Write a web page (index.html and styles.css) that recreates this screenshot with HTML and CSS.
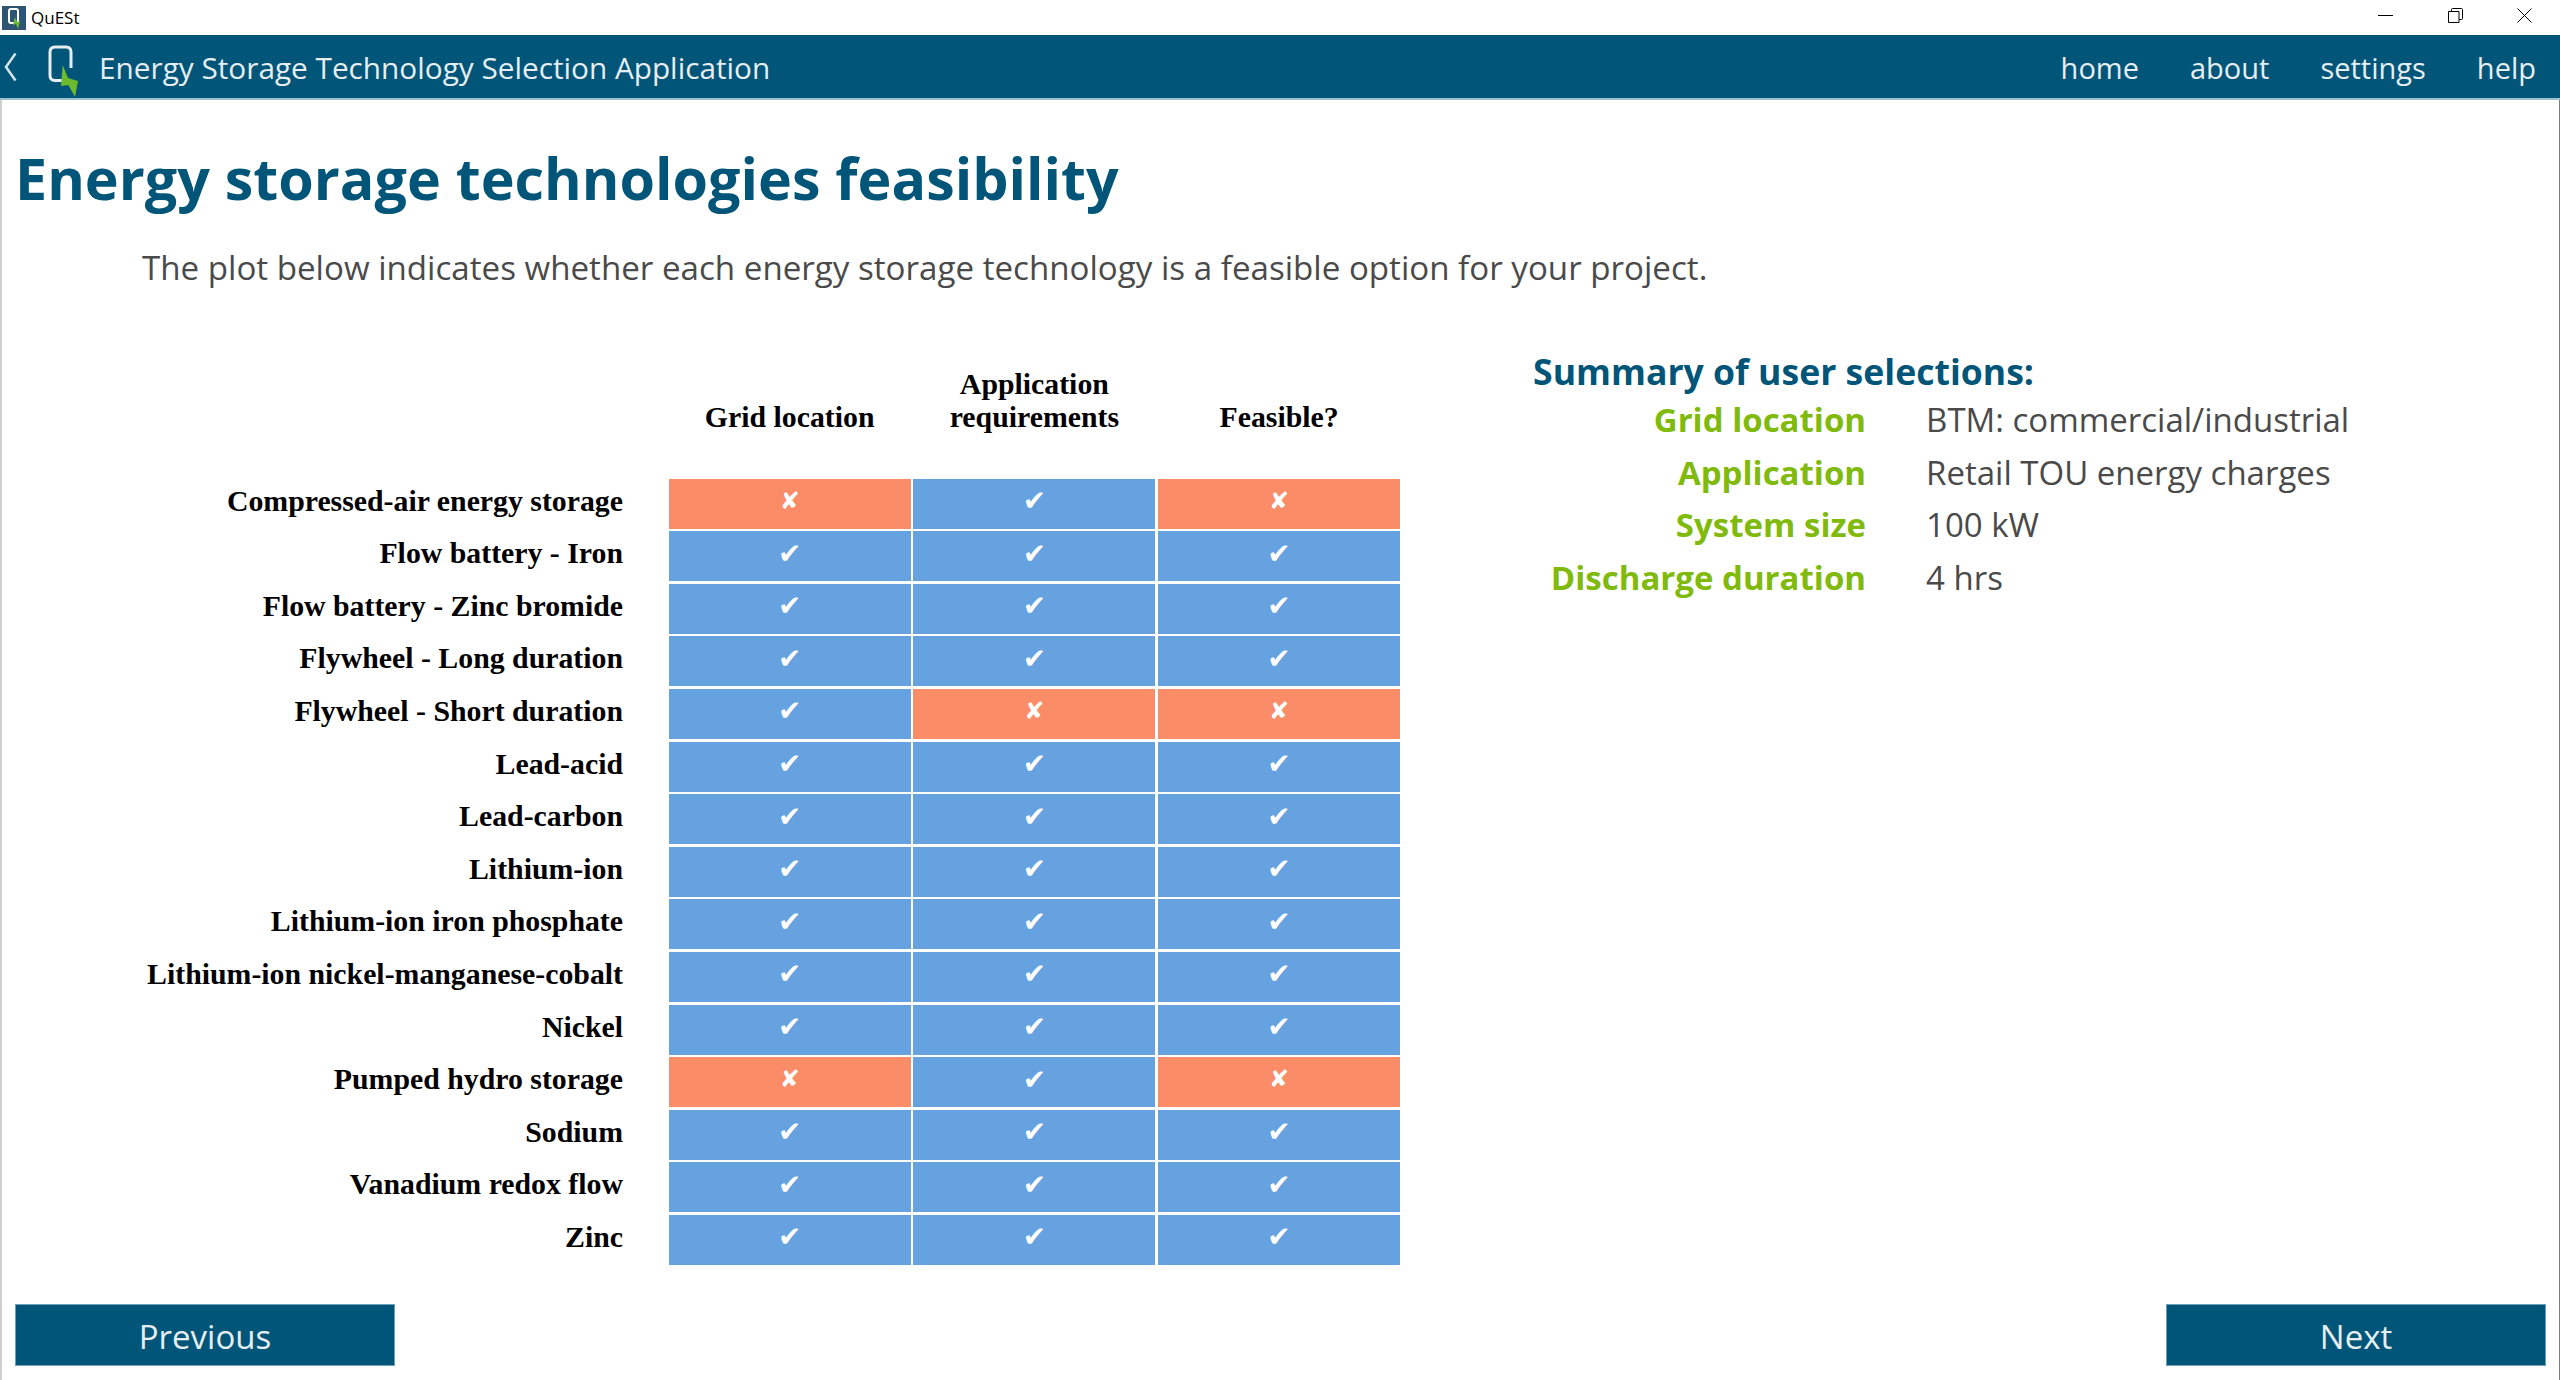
FILE: index.html
```html
<!DOCTYPE html>
<html lang="en">
<head>
    <title>QuESt</title>
    <meta charset="UTF-8" />
    <link rel="stylesheet" href="styles.css">
</head>
<body>
    <div class="titlebar">
        <div class="app-name">
            <svg class="app-icon" viewBox="0 0 24 24">
                <rect width="24" height="24" fill="#2f5575" />
                <path d="M9 3h5q2 0 2 2v10q0 2-2 2H9q-2 0-2-2V5q0-2 2-2z" fill="none" stroke="#fff" stroke-width="2" />
                <path d="M13 11l2 5 3-1-2 8-2-5-3 1z" fill="#6cbb2c" />
            </svg>
            <span>QuESt</span>
        </div>
        <div class="window-controls">
            <svg class="win-btn" viewBox="0 0 15 15"><path d="M0 7.500h15" stroke="#000" fill="none" /></svg>
            <svg class="win-btn" viewBox="0 0 15 15"><path d="M.5 3.500h10.500v11H.5zM3.500 3.500V1.500a1 1 0 0 1 1-1h9a1 1 0 0 1 1 1v9a1 1 0 0 1-1 1H11" stroke="#000" fill="none" /></svg>
            <svg class="win-btn" viewBox="0 0 15 15"><path d="M.5.500l14 14M14.500.500l-14 14" stroke="#000" fill="none" /></svg>
        </div>
    </div>

    <nav class="navbar">
        <svg class="back-icon" viewBox="0 0 13 30"><path d="M11.500 1.500L2 15l9.500 13.500" fill="none" stroke="#d5e3ea" stroke-width="2.500" /></svg>
        <svg class="logo" viewBox="0 0 30 52">
            <path d="M14 35.500H7q-5 0-5-5V7q0-5 5-5h11q5 0 5 5v16" fill="none" stroke="#e6eef2" stroke-width="3" />
            <path d="M14.700 20L20 33l10 3-3 16-6.700-12-7.300 1z" fill="#6cbb2c" />
        </svg>
        <span class="app-title">Energy Storage Technology Selection Application</span>
        <div class="nav-links">
            <a>home</a>
            <a>about</a>
            <a>settings</a>
            <a>help</a>
        </div>
    </nav>

    <main>
        <h1>Energy storage technologies feasibility</h1>
        <p class="intro">The plot below indicates whether each energy storage technology is a feasible option for your project.</p>

        <div class="content">
            <div class="plot">
                <div class="col-head"></div>
                <div class="col-head">Grid location</div>
                <div class="col-head">Application<br>requirements</div>
                <div class="col-head">Feasible?</div>

                <div class="tech">Compressed-air energy storage</div>
                <div class="cell no">✘</div><div class="cell yes">✔</div><div class="cell no">✘</div>
                <div class="tech">Flow battery - Iron</div>
                <div class="cell yes">✔</div><div class="cell yes">✔</div><div class="cell yes">✔</div>
                <div class="tech">Flow battery - Zinc bromide</div>
                <div class="cell yes">✔</div><div class="cell yes">✔</div><div class="cell yes">✔</div>
                <div class="tech">Flywheel - Long duration</div>
                <div class="cell yes">✔</div><div class="cell yes">✔</div><div class="cell yes">✔</div>
                <div class="tech">Flywheel - Short duration</div>
                <div class="cell yes">✔</div><div class="cell no">✘</div><div class="cell no">✘</div>
                <div class="tech">Lead-acid</div>
                <div class="cell yes">✔</div><div class="cell yes">✔</div><div class="cell yes">✔</div>
                <div class="tech">Lead-carbon</div>
                <div class="cell yes">✔</div><div class="cell yes">✔</div><div class="cell yes">✔</div>
                <div class="tech">Lithium-ion</div>
                <div class="cell yes">✔</div><div class="cell yes">✔</div><div class="cell yes">✔</div>
                <div class="tech">Lithium-ion iron phosphate</div>
                <div class="cell yes">✔</div><div class="cell yes">✔</div><div class="cell yes">✔</div>
                <div class="tech">Lithium-ion nickel-manganese-cobalt</div>
                <div class="cell yes">✔</div><div class="cell yes">✔</div><div class="cell yes">✔</div>
                <div class="tech">Nickel</div>
                <div class="cell yes">✔</div><div class="cell yes">✔</div><div class="cell yes">✔</div>
                <div class="tech">Pumped hydro storage</div>
                <div class="cell no">✘</div><div class="cell yes">✔</div><div class="cell no">✘</div>
                <div class="tech">Sodium</div>
                <div class="cell yes">✔</div><div class="cell yes">✔</div><div class="cell yes">✔</div>
                <div class="tech">Vanadium redox flow</div>
                <div class="cell yes">✔</div><div class="cell yes">✔</div><div class="cell yes">✔</div>
                <div class="tech">Zinc</div>
                <div class="cell yes">✔</div><div class="cell yes">✔</div><div class="cell yes">✔</div>
            </div>

            <div class="summary">
                <h2>Summary of user selections:</h2>
                <dl>
                    <dt>Grid location</dt><dd>BTM: commercial/industrial</dd>
                    <dt>Application</dt><dd>Retail TOU energy charges</dd>
                    <dt>System size</dt><dd>100 kW</dd>
                    <dt>Discharge duration</dt><dd>4 hrs</dd>
                </dl>
            </div>
        </div>

        <div class="footer-nav">
            <button>Previous</button>
            <button>Next</button>
        </div>
    </main>
</body>
</html>
```

FILE: styles.css
```css
html, body {
    height: 100%;
}
body {
    margin: 0;
    background: #fff;
    font-family: "Open Sans", sans-serif;
    color: #4a4a4a;
    display: flex;
    flex-direction: column;
    overflow: hidden;
}
.titlebar {
    height: 35px;
    flex: none;
    display: flex;
    justify-content: space-between;
    align-items: center;
    background: #fff;
}
.app-name {
    display: flex;
    align-items: center;
    gap: 5px;
    padding-left: 2px;
    color: #000;
    font-family: "Open Sans", sans-serif;
    font-size: 17px;
}
.app-icon {
    width: 24px;
    height: 24px;
}
.window-controls {
    display: flex;
    gap: 54.500px;
    padding-right: 28px;
    padding-bottom: 4px;
}
.win-btn {
    width: 15px;
    height: 15px;
}
.navbar {
    height: 63px;
    flex: none;
    display: flex;
    align-items: center;
    background: #005578;
    border-bottom: 2px solid #9dc0d0;
    color: #e6eef2;
}
.back-icon {
    width: 13px;
    height: 30px;
    margin-left: 4px;
}
.logo {
    width: 30px;
    height: 52px;
    margin-left: 31px;
    margin-top: 9px;
}
.app-title {
    margin-left: 21px;
    padding-top: 2px;
    font-size: 29.750px;
}
.nav-links {
    margin-left: auto;
    display: flex;
    gap: 51px;
    padding-top: 2px;
    padding-right: 24px;
    font-size: 29px;
}
main {
    flex: 1;
    min-height: 0;
    display: flex;
    flex-direction: column;
    padding: 0 13px 14px 13px;
    border-left: 2px solid #cfcfcf;
    border-right: 1px solid #7d7d7d;
}
h1 {
    margin: 43px 0 0;
    font-size: 57.400px;
    line-height: 70px;
    font-weight: 700;
    color: #005578;
}
.intro {
    margin: 33px 0 0 127px;
    font-size: 33.130px;
    line-height: 44px;
}
.content {
    flex: 1;
    display: flex;
    margin-top: 50px;
}
.plot {
    display: grid;
    grid-template-columns: 651px 242px 242px 242px;
    grid-template-rows: 98px repeat(15, 50px);
    row-gap: 2.600px;
    column-gap: 2.700px;
    margin-top: 38px;
    font-family: "Liberation Serif", serif;
    font-weight: 700;
    color: #000;
    font-size: 29.800px;
}
.col-head {
    text-align: center;
    line-height: 33px;
    align-self: end;
    padding-bottom: 43px;
}
.tech {
    text-align: right;
    padding-right: 43px;
    line-height: 44px;
}
.cell {
    display: flex;
    align-items: center;
    justify-content: center;
    padding-bottom: 6px;
    color: #fff;
    font-family: "DejaVu Sans", sans-serif;
    font-size: 28px;
    font-weight: 400;
}
.yes {
    background: #66a1e0;
}
.no {
    background: #fa8d67;
    font-size: 24px;
}
.summary {
    margin-left: 133px;
    padding-top: 8px;
}
h2 {
    margin: 0;
    font-size: 35.600px;
    line-height: 46px;
    font-weight: 700;
    color: #005578;
}
dl {
    margin: 0;
    display: grid;
    grid-template-columns: 333px auto;
    column-gap: 60px;
    font-size: 33px;
    line-height: 52.500px;
}
dt {
    text-align: right;
    font-weight: 700;
    color: #80ba0c;
}
dd {
    margin: 0;
}
.footer-nav {
    display: flex;
    justify-content: space-between;
}
button {
    width: 380px;
    height: 62px;
    padding-top: 3px;
    background: #005578;
    color: #e6eef2;
    border: 1px solid #6d9fb5;
    font-family: "Open Sans", sans-serif;
    font-size: 33px;
}
```
